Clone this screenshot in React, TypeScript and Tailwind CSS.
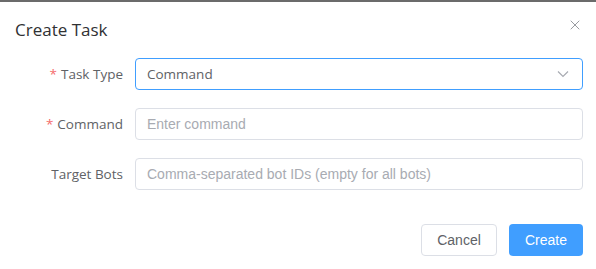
import { X } from "lucide-react";

const ui = "font-['Open_Sans',sans-serif]";
const arial = "font-['Liberation_Sans',Arial,sans-serif]";

function Label({ text, required }: { text: string; required?: boolean }) {
  return (
    <div className={`w-[120px] shrink-0 pr-3 text-right text-[13.5px] text-[#606266] leading-8 ${ui}`}>
      {required && <span className="mr-1 text-[#f56c6c]">*</span>}
      {text}
    </div>
  );
}

export default function App() {
  return (
    <div className="h-[269px] w-[596px] overflow-hidden bg-white">
      <div className="h-[2px] bg-[#6b6b6b]" />
      <div className="pl-[15px] pr-[13px]">
        <div className="flex items-start justify-between pt-[16px]">
          <h2 className={`text-[17px] leading-6 text-[#303133] ${ui}`}>Create Task</h2>
          <button className="mr-0 mt-[-1px] text-[#909399]">
            <X size={16} strokeWidth={1.4} />
          </button>
        </div>
        <form className="mt-[16px]" onSubmit={(e) => e.preventDefault()}>
          <div className="mb-[18px] flex">
            <Label text="Task Type" required />
            <div className="flex h-8 flex-1 items-center justify-between rounded border border-[#409eff] px-[11px]">
              <span className={`text-[13.5px] text-[#606266] ${ui}`}>Command</span>
              <svg width="12" height="8" viewBox="0 0 12 8" className="mr-[2px]">
                <path d="M1 1.5 L6 6.5 L11 1.5" fill="none" stroke="#a8abb2" strokeWidth="1.2" />
              </svg>
            </div>
          </div>
          <div className="mb-[18px] flex">
            <Label text="Command" required />
            <input
              placeholder="Enter command"
              className={`h-8 flex-1 rounded border border-[#dcdfe6] px-[11px] text-sm text-[#606266] outline-none placeholder:text-[#a8abb2] ${arial}`}
            />
          </div>
          <div className="flex">
            <Label text="Target Bots" />
            <input
              placeholder="Comma-separated bot IDs (empty for all bots)"
              className={`h-8 flex-1 rounded border border-[#dcdfe6] px-[11px] text-sm text-[#606266] outline-none placeholder:text-[#a8abb2] ${arial}`}
            />
          </div>
        </form>
        <div className="mt-[34px] flex justify-end gap-3">
          <button className={`h-8 w-[76px] rounded border border-[#dcdfe6] bg-white text-sm text-[#606266] ${arial}`}>
            Cancel
          </button>
          <button className={`h-8 w-[74px] rounded bg-[#409eff] text-sm text-white ${arial}`}>
            Create
          </button>
        </div>
      </div>
    </div>
  );
}
